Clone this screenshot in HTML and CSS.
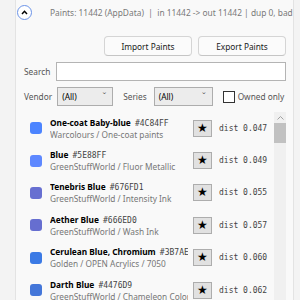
FILE: index.html
```html
<!DOCTYPE html>
<html lang="en">
<head>
  <meta charset="UTF-8" />
  <title>Paints</title>
  <link rel="stylesheet" href="styles.css">
</head>
<body>

<div class="panel">
  <div class="summary">
    <button class="toggle" title="Collapse">
      <svg width="7" height="5" viewBox="0 0 7 5"><path d="M1 4 L3.5 1.3 L6 4" fill="none" stroke="#000" stroke-width="1.5"/></svg>
    </button>
    <span class="stats">Paints: 11442 (AppData) &nbsp;| &nbsp;in 11442 -&gt; out 11442 | dup 0, bad 0, skipped 0</span>
  </div>

  <div class="actions">
    <button class="btn">Import Paints</button>
    <button class="btn">Export Paints</button>
  </div>

  <div class="search-row">
    <label for="search">Search</label>
    <input type="text" id="search" />
  </div>

  <div class="filter-row">
    <label>Vendor</label>
    <div class="select vendor">(All)<span class="chev">&#711;</span></div>
    <label class="series-label">Series</label>
    <div class="select series">(All)<span class="chev">&#711;</span></div>
    <span class="check"></span>
    <label>Owned only</label>
  </div>

  <div class="list-wrap">
    <ul class="paint-list">
      <li class="paint">
        <span class="swatch" style="background:#4C84FF"></span>
        <div class="info">
          <div class="name">One-coat Baby-blue <span class="hex">#4C84FF</span></div>
          <div class="sub">Warcolours / One-coat paints</div>
        </div>
        <button class="star">&#9733;</button>
        <span class="dist">dist 0.047</span>
      </li>
      <li class="paint">
        <span class="swatch" style="background:#5E88FF"></span>
        <div class="info">
          <div class="name">Blue <span class="hex">#5E88FF</span></div>
          <div class="sub">GreenStuffWorld / Fluor Metallic</div>
        </div>
        <button class="star">&#9733;</button>
        <span class="dist">dist 0.049</span>
      </li>
      <li class="paint">
        <span class="swatch" style="background:#676FD1"></span>
        <div class="info">
          <div class="name">Tenebris Blue <span class="hex">#676FD1</span></div>
          <div class="sub">GreenStuffWorld / Intensity Ink</div>
        </div>
        <button class="star">&#9733;</button>
        <span class="dist">dist 0.055</span>
      </li>
      <li class="paint">
        <span class="swatch" style="background:#666ED0"></span>
        <div class="info">
          <div class="name">Aether Blue <span class="hex">#666ED0</span></div>
          <div class="sub">GreenStuffWorld / Wash Ink</div>
        </div>
        <button class="star">&#9733;</button>
        <span class="dist">dist 0.057</span>
      </li>
      <li class="paint">
        <span class="swatch" style="background:#3B7AE5"></span>
        <div class="info">
          <div class="name">Cerulean Blue, Chromium <span class="hex">#3B7AE5</span></div>
          <div class="sub">Golden / OPEN Acrylics / 7050</div>
        </div>
        <button class="star">&#9733;</button>
        <span class="dist">dist 0.060</span>
      </li>
      <li class="paint">
        <span class="swatch" style="background:#4476D9"></span>
        <div class="info">
          <div class="name">Darth Blue <span class="hex">#4476D9</span></div>
          <div class="sub">GreenStuffWorld / Chameleon Colors</div>
        </div>
        <button class="star">&#9733;</button>
        <span class="dist">dist 0.062</span>
      </li>
    </ul>
    <div class="scrollbar">
      <span class="arrow">
        <svg width="7" height="4" viewBox="0 0 7 4"><path d="M0.5 3.5 L3.5 0.5 L6.5 3.5" fill="none" stroke="#a0a0a0" stroke-width="1"/></svg>
      </span>
      <div class="thumb"></div>
    </div>
  </div>
</div>

</body>
</html>
```

FILE: styles.css
```css
* {
  box-sizing: border-box;
}

body {
  margin: 0;
  height: 300px;
  overflow: hidden;
  background: #f3f3f3;
  font-family: 'Noto Sans', 'Segoe UI', sans-serif;
  font-size: 8.3px;
  color: #1a1a1a;
}

.panel {
  margin-left: 15px;
  width: 279px;
  height: 300px;
  background: #f9f9f9;
  border-left: 1px solid #e3e3e3;
  border-right: 1px solid #e3e3e3;
  overflow: hidden;
}

.summary {
  display: flex;
  align-items: center;
  height: 25px;
  padding-left: 1px;
  white-space: nowrap;
}

.toggle {
  flex: none;
  width: 15px;
  height: 15px;
  padding: 0;
  margin-right: 18px;
  border: 1px solid #6b93e8;
  border-radius: 50%;
  background: #fff;
  display: flex;
  align-items: center;
  justify-content: center;
}

.stats {
  color: #7a7a7a;
  font-size: 8.4px;
}

.actions {
  display: flex;
  justify-content: flex-end;
  gap: 6px;
  padding: 11px 7px 0 0;
}

.btn {
  width: 88px;
  height: 20px;
  padding: 0;
  font-family: inherit;
  font-size: 8.3px;
  color: #1a1a1a;
  background: #fbfbfb;
  border: 1px solid #d5d5d5;
  border-bottom-color: #c5c5c5;
  border-radius: 4px;
}

.search-row {
  display: flex;
  align-items: center;
  gap: 6px;
  padding: 6px 7px 0 8px;
}

.search-row label,
.filter-row label {
  color: #555;
}

.search-row input {
  flex: 1;
  height: 19px;
  border: 1px solid #b4b4b4;
  background: #fff;
}

.filter-row {
  display: flex;
  align-items: center;
  height: 25px;
  padding: 6px 0 0 8px;
}

.select {
  position: relative;
  height: 19px;
  margin-left: 5px;
  padding: 3px 0 0 4px;
  background: #ececec;
  border: 1px solid #adadad;
  color: #000;
}

.vendor {
  width: 56px;
}

.series {
  width: 59px;
  margin-left: 7px;
}

.chev {
  position: absolute;
  right: 6px;
  top: 4px;
  font-size: 9px;
  line-height: 9px;
  color: #555;
}

.series-label {
  margin-left: 10px;
}

.check {
  flex: none;
  width: 12px;
  height: 12px;
  margin: 0 3px 0 10px;
  border: 1px solid #333;
  background: #fff;
}

.list-wrap {
  display: flex;
  margin-top: 6px;
  height: 200px;
}

.paint-list {
  flex: 1;
  list-style: none;
  margin: 0;
  padding: 0;
}

.paint {
  display: flex;
  align-items: center;
  height: 32.4px;
  padding-left: 14px;
}

.swatch {
  flex: none;
  width: 12px;
  height: 12px;
  border-radius: 3px;
}

.info {
  width: 138px;
  margin-left: 8px;
  overflow: hidden;
  white-space: nowrap;
  line-height: 11px;
}

.name {
  font-weight: bold;
  color: #000;
}

.hex {
  font-family: 'DejaVu Sans Mono', monospace;
  font-weight: normal;
  font-size: 8px;
  color: #444;
  margin-left: 2px;
}

.sub {
  color: #777;
}

.star {
  flex: none;
  width: 19px;
  height: 17px;
  margin-left: 5px;
  padding: 0;
  font-family: 'DejaVu Sans', sans-serif;
  font-size: 12px;
  line-height: 13px;
  color: #000;
  background: #e1e1e1;
  border: 1px solid #adadad;
}

.dist {
  margin-left: 7px;
  font-family: 'DejaVu Sans Mono', monospace;
  font-size: 8px;
  color: #444;
}

.scrollbar {
  flex: none;
  width: 12px;
  margin-right: 7px;
  background: #f0f0f0;
}

.arrow {
  display: flex;
  justify-content: center;
  padding-top: 4px;
  height: 11px;
}

.thumb {
  height: 20px;
  background: #c1c1c1;
}
```
